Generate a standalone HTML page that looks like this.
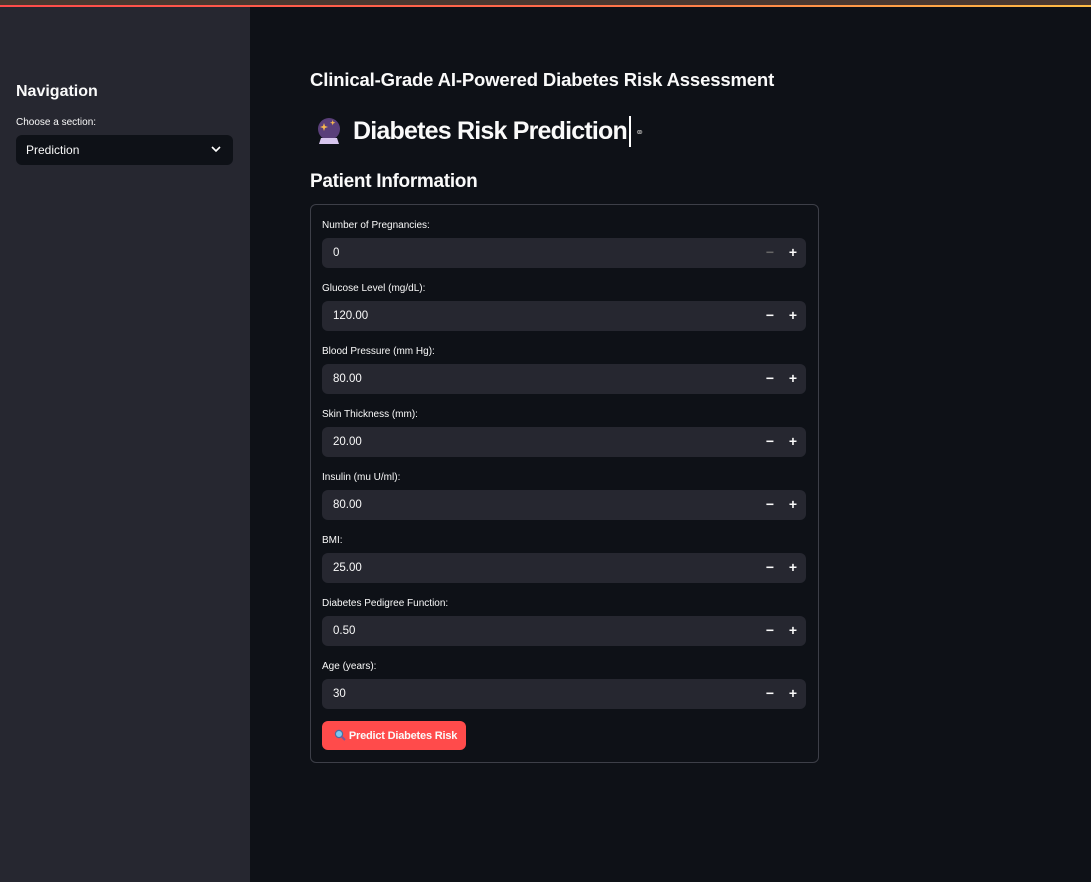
<!DOCTYPE html>
<html><head><meta charset="utf-8"><style>
*{box-sizing:border-box;margin:0;padding:0}
body{width:1091px;height:882px;background:#0e1117;font-family:"Liberation Sans",sans-serif;color:#fafafa;position:relative;overflow:hidden}
.top{position:absolute;left:0;top:0;width:1091px;height:5px;background:#4a3830}
.red{position:absolute;left:0;top:5px;width:1091px;height:2px;background:linear-gradient(90deg,#ff4b4b,#ff6a4b,#ffbd45)}
.side{position:absolute;left:0;top:7px;width:250px;height:875px;background:#262730}
.nav{position:absolute;left:16px;top:83px;font-size:16px;font-weight:bold}
.lab{position:absolute;font-size:10px;color:#fafafa;font-weight:500}
.sel{position:absolute;left:16px;top:135px;width:217px;height:30px;background:#0e1117;border-radius:6px;font-size:12px;padding:8px 10px}
.sel svg{position:absolute;right:12px;top:11px}
.h1{position:absolute;left:310px;top:69px;font-size:18.5px;font-weight:bold;letter-spacing:-0.15px}
.h2{position:absolute;left:353px;top:117px;font-size:25px;font-weight:bold;letter-spacing:-0.8px}
.cur{position:absolute;left:629px;top:116px;width:2px;height:31px;background:#fff}
.h3{position:absolute;left:310px;top:171px;font-size:19px;font-weight:bold;letter-spacing:-0.3px}
.box{position:absolute;left:310px;top:204px;width:509px;height:559px;border:1px solid #3d3f48;border-radius:6px}
.inp{position:absolute;left:322px;width:484px;height:30px;background:#262730;border-radius:6px;font-size:11.5px;padding:9px 11px}
.mn,.pl{position:absolute;top:6px;font-size:14px;font-weight:bold}
.mn{right:32px}.pl{right:9px}
.btn{position:absolute;left:322px;top:721px;width:144px;height:29px;background:#ff4b4b;border-radius:6px;font-size:11px;font-weight:bold;padding:8px 0 0 12px;letter-spacing:-0.2px}
</style></head><body>
<div class="top"></div><div class="red"></div>
<div class="side"></div>
<div class="nav">Navigation</div>
<div class="lab" style="left:16px;top:117px">Choose a section:</div>
<div class="sel">Prediction<svg width="10" height="7" viewBox="0 0 10 7"><path d="M1 1l4 4 4-4" stroke="#fff" stroke-width="1.6" fill="none"/></svg></div>
<div class="h1">Clinical-Grade AI-Powered Diabetes Risk Assessment</div>
<svg style="position:absolute;left:316px;top:117px" width="26" height="28" viewBox="0 0 26 28"><circle cx="13" cy="12" r="11" fill="#5a3f7a"/><path d="M7 9l1 -3 1 3 3 1-3 1-1 3-1-3-3-1z" fill="#f8b84e"/><path d="M16 5l.7-2 .7 2 2 .7-2 .7-.7 2-.7-2-2-.7z" fill="#f8b84e"/><path d="M5 21h16l2 6H3z" fill="#d7c6ee"/></svg>
<div class="h2">Diabetes Risk Prediction</div>
<div class="cur"></div>
<div style="position:absolute;left:635px;top:126px;font-size:11px;color:#999">⚭</div>
<div class="h3">Patient Information</div>
<div class="box"></div>

<div class="lab" style="left:322px;top:220px">Number of Pregnancies:</div>
<div class="inp" style="top:238px">0<span class="mn" style="color:#666">−</span><span class="pl">+</span></div>
<div class="lab" style="left:322px;top:283px">Glucose Level (mg/dL):</div>
<div class="inp" style="top:301px">120.00<span class="mn">−</span><span class="pl">+</span></div>
<div class="lab" style="left:322px;top:346px">Blood Pressure (mm Hg):</div>
<div class="inp" style="top:364px">80.00<span class="mn">−</span><span class="pl">+</span></div>
<div class="lab" style="left:322px;top:409px">Skin Thickness (mm):</div>
<div class="inp" style="top:427px">20.00<span class="mn">−</span><span class="pl">+</span></div>
<div class="lab" style="left:322px;top:472px">Insulin (mu U/ml):</div>
<div class="inp" style="top:490px">80.00<span class="mn">−</span><span class="pl">+</span></div>
<div class="lab" style="left:322px;top:535px">BMI:</div>
<div class="inp" style="top:553px">25.00<span class="mn">−</span><span class="pl">+</span></div>
<div class="lab" style="left:322px;top:598px">Diabetes Pedigree Function:</div>
<div class="inp" style="top:616px">0.50<span class="mn">−</span><span class="pl">+</span></div>
<div class="lab" style="left:322px;top:661px">Age (years):</div>
<div class="inp" style="top:679px">30<span class="mn">−</span><span class="pl">+</span></div>
<div class="btn"><svg width="12" height="12" viewBox="0 0 12 12" style="vertical-align:-2px"><circle cx="5" cy="5" r="3.6" fill="#7ec8f0" stroke="#4a6fa0" stroke-width="1.2"/><path d="M7.5 7.5l3.5 3.5" stroke="#7a5a9a" stroke-width="2"/></svg> Predict Diabetes Risk</div>
</body></html>
